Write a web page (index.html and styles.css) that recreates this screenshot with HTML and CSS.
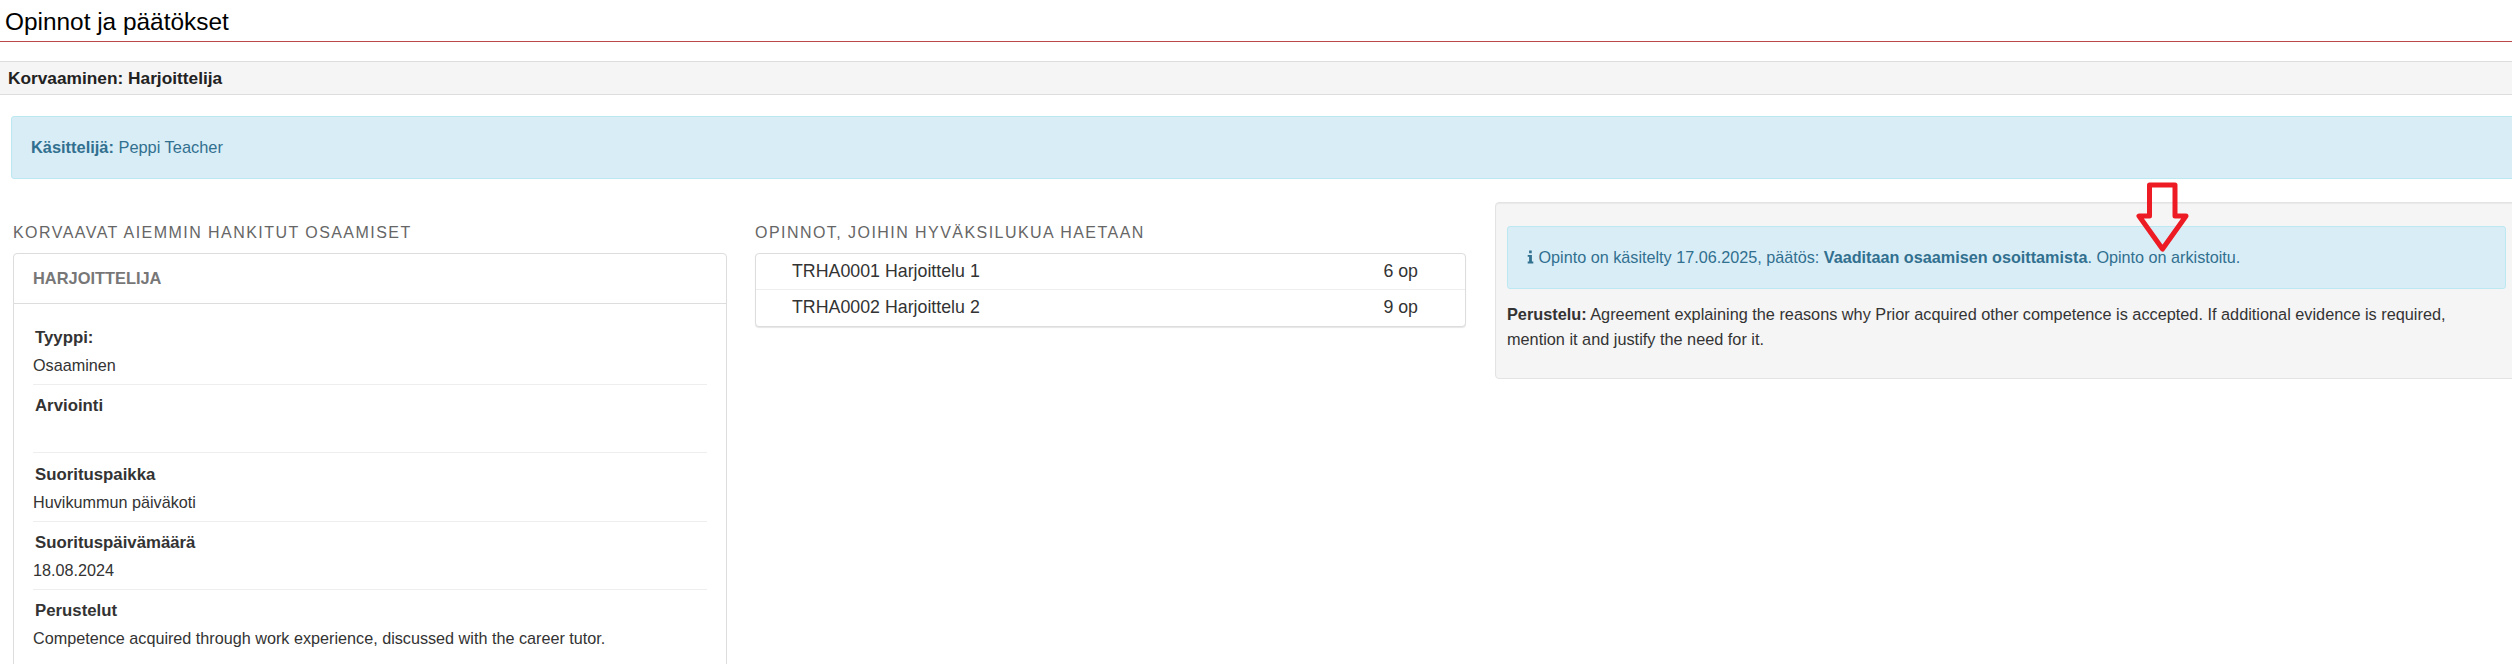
FILE: index.html
```html
<!DOCTYPE html>
<html lang="fi">
<head>
  <meta charset="UTF-8" />
  <title>Opinnot ja päätökset</title>
  <link rel="stylesheet" href="styles.css">
</head>
<body>
  <h1 class="page-title">Opinnot ja päätökset</h1>

  <h2 class="section-bar">Korvaaminen: Harjoittelija</h2>

  <div class="alert handler"><b>Käsittelijä:</b> Peppi Teacher</div>

  <div class="columns">
    <section class="col">
      <h3 class="col-title">KORVAAVAT AIEMMIN HANKITUT OSAAMISET</h3>
      <div class="card">
        <div class="card-head">HARJOITTELIJA</div>
        <div class="card-body">
          <div class="field">
            <div class="field-label">Tyyppi:</div>
            <div class="field-value">Osaaminen</div>
          </div>
          <div class="field">
            <div class="field-label">Arviointi</div>
            <div class="field-value">&nbsp;</div>
          </div>
          <div class="field">
            <div class="field-label">Suorituspaikka</div>
            <div class="field-value">Huvikummun päiväkoti</div>
          </div>
          <div class="field">
            <div class="field-label">Suorituspäivämäärä</div>
            <div class="field-value">18.08.2024</div>
          </div>
          <div class="field">
            <div class="field-label">Perustelut</div>
            <div class="field-value">Competence acquired through work experience, discussed with the career tutor.</div>
          </div>
        </div>
      </div>
    </section>

    <section class="col">
      <h3 class="col-title">OPINNOT, JOIHIN HYVÄKSILUKUA HAETAAN</h3>
      <ul class="course-list">
        <li><span>TRHA0001 Harjoittelu 1</span><span class="credits">6 op</span></li>
        <li><span>TRHA0002 Harjoittelu 2</span><span class="credits">9 op</span></li>
      </ul>
    </section>

    <section class="decision">
      <div class="alert decision-alert">
        <svg class="info-icon" viewBox="0 0 8 16" aria-hidden="true"><path d="M2.4 0.6h3v3h-3zM0.8 5.6h4.8v7.6h1.6v2.2H0.8v-2.2h1.6V7.8H0.8z" fill="currentColor"/></svg>
        Opinto on käsitelty 17.06.2025, päätös: <b>Vaaditaan osaamisen osoittamista</b>. Opinto on arkistoitu.
      </div>
      <p class="reason"><b>Perustelu:</b> Agreement explaining the reasons why Prior acquired other competence is accepted. If additional evidence is required, mention it and justify the need for it.</p>
    </section>
  </div>

  <!-- punainen nuoli kuvakaappauksen päällä -->
  <svg class="arrow" width="64" height="76" viewBox="0 0 64 76" aria-hidden="true">
    <path d="M19.5 5H45V36H56L32.5 69L9 36H19.5Z" fill="none" stroke="#ed1c24" stroke-width="5" stroke-linejoin="round"/>
  </svg>
</body>
</html>
```

FILE: styles.css
```css
html, body {
  margin: 0;
  height: 664px;
  overflow: hidden;
}
body {
  position: relative;
  font-family: "Liberation Sans", Arial, sans-serif;
  font-size: 16px;
  line-height: 23px;
  color: #333;
  background: #fff;
}
.page-title {
  margin: 0;
  height: 41px;
  padding-left: 5px;
  font-size: 24.4px;
  font-weight: normal;
  line-height: 44px;
  color: #000;
  border-bottom: 1px solid #b94a48;
}
.section-bar {
  margin: 19px 0 0;
  height: 32px;
  padding-left: 8px;
  font-size: 17.3px;
  line-height: 32px;
  color: #222;
  background: #f5f5f5;
  border-top: 1px solid #ddd;
  border-bottom: 1px solid #ddd;
}
.alert {
  color: #31708f;
  background: #d9edf7;
  border: 1px solid #bce8f1;
  border-radius: 3px;
}
.handler {
  margin: 21px -12px 0 11px;
  height: 61px;
  padding-left: 19px;
  font-size: 16.4px;
  line-height: 61px;
}
.columns {
  display: grid;
  grid-template-columns: 714px 711px 1fr;
  column-gap: 28px;
  margin-top: 23px;
  padding-left: 13px;
  width: 2518px;
  box-sizing: border-box;
  align-items: start;
}
.col-title {
  margin: 20px 0 10px;
  font-size: 16px;
  font-weight: normal;
  line-height: 21px;
  letter-spacing: 1.45px;
  color: #666;
}
.card {
  background: #fff;
  border: 1px solid #ddd;
  border-radius: 4px;
}
.card-head {
  height: 49px;
  padding-left: 19px;
  font-size: 16.4px;
  font-weight: bold;
  line-height: 49px;
  color: #777;
  border-bottom: 1px solid #ddd;
}
.card-body {
  padding: 22px 19px 0;
}
.field {
  padding-bottom: 7px;
  margin-bottom: 9.33px;
  border-bottom: 1px solid #eee;
}
.field:last-child {
  border-bottom: none;
}
.field-label {
  margin-left: 2px;
  margin-bottom: 5px;
  font-size: 16.8px;
  font-weight: bold;
}
.field-value {
  font-size: 16.2px;
}
.course-list {
  margin: 0;
  padding: 0;
  list-style: none;
  background: #fff;
  border: 1px solid #ddd;
  border-radius: 4px;
  box-shadow: 0 1px 1px rgba(0, 0, 0, .1);
}
.course-list li {
  display: flex;
  justify-content: space-between;
  height: 35px;
  padding: 0 47px 0 36px;
  font-size: 17.8px;
  line-height: 35px;
}
.course-list li + li {
  height: 36px;
  border-top: 1px solid #eee;
}
.decision {
  margin-left: 1px;
  padding: 23px 11px 12px;
  height: 177px;
  box-sizing: border-box;
  background: #f5f5f5;
  border: 1px solid #e3e3e3;
  border-radius: 4px;
  box-shadow: inset 0 1px 1px rgba(0, 0, 0, .05);
}
.decision-alert {
  height: 61px;
  padding-left: 19px;
  font-size: 16.2px;
  line-height: 61px;
}
.info-icon {
  width: 7px;
  height: 14px;
  vertical-align: -1px;
}
.reason {
  margin: 13px 0 0;
  padding-right: 20px;
  font-size: 16.3px;
  line-height: 25px;
}
.arrow {
  position: absolute;
  left: 2130px;
  top: 180px;
}
```
